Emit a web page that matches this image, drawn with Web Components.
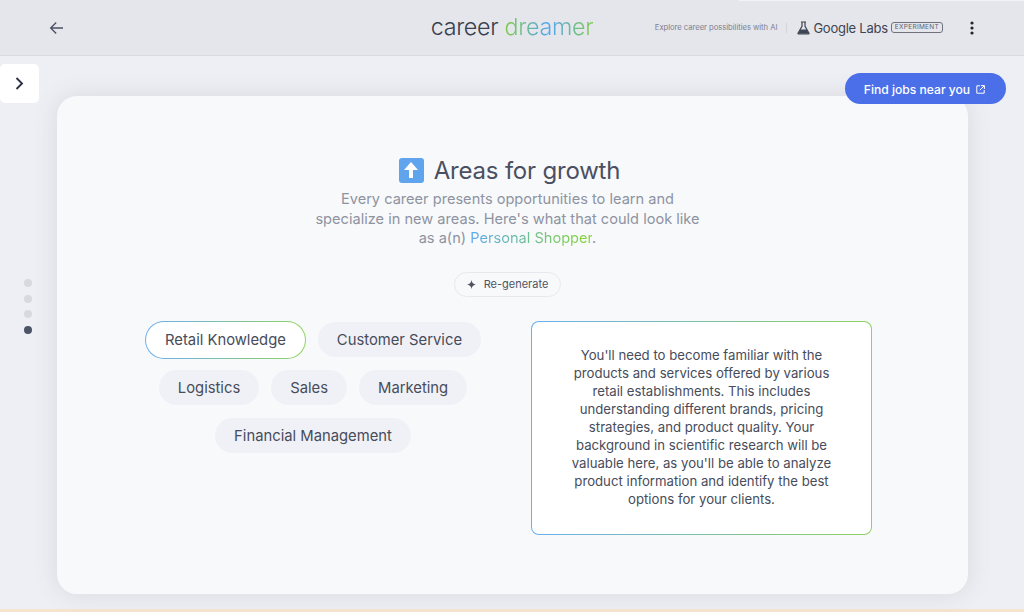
<!DOCTYPE html>
<html>
<head>
<meta charset="utf-8">
<title>Career Dreamer</title>
<style>
html, body { margin: 0; height: 100%; }
body {
    font-family: Inter, "Liberation Sans", sans-serif;
    background: #eeeff4;
    overflow: hidden;
}
</style>
</head>
<body>
<app-shell>
    <top-bar></top-bar>
    <side-toggle></side-toggle>
    <step-dots></step-dots>
    <jobs-button>Find jobs near you</jobs-button>
    <growth-card></growth-card>
</app-shell>

<script>
const gradient = 'linear-gradient(90deg, #6aaeef 0%, #8fd35f 100%)';

class AppShell extends HTMLElement {
    constructor() {
        super();
        this.attachShadow({mode: 'open'});
        this.shadowRoot.innerHTML = `
        <style>
        :host {
            display: flex;
            flex-direction: column;
            height: 612px;
            position: relative;
            box-sizing: border-box;
            border-bottom: 3px solid #f6e4cf;
            background: #eeeff4;
        }
        main {
            flex: 1;
            min-height: 0;
            padding: 40px 56px 15px 57px;
        }
        </style>
        <slot name="bar"></slot>
        <main><slot></slot></main>`;
        const bar = this.querySelector('top-bar');
        if (bar) bar.slot = 'bar';
    }
}

class TopBar extends HTMLElement {
    constructor() {
        super();
        this.attachShadow({mode: 'open'});
        this.shadowRoot.innerHTML = `
        <style>
        :host {
            display: grid;
            grid-template-columns: 1fr auto 1fr;
            align-items: center;
            height: 55px;
            background: linear-gradient(#f2f3f6, #f2f3f6) 739px 0 / 285px 1px no-repeat, #e5e6ec;
            border-bottom: 1px solid #d9dae0;
            color: #3c4354;
        }
        .back { padding-left: 49px; display: flex; }
        .logo {
            font-size: 23.3px;
            font-weight: 300;
            letter-spacing: -0.3px;
            color: #39404f;
            white-space: nowrap;
            padding-bottom: 2px;
        }
        .logo span {
            background: linear-gradient(90deg, #7fcb4a 0%, #55a5f0 50%, #7fcb4a 100%);
            -webkit-background-clip: text;
            background-clip: text;
            color: transparent;
        }
        .right {
            display: flex;
            align-items: center;
            justify-content: flex-end;
            padding-right: 50px;
        }
        .tag { font-size: 7.7px; color: #7c8190; white-space: nowrap; letter-spacing: -.05px; }
        .sep { width: 1px; height: 10px; background: #d3d4da; margin: 0 10px 0 9px; }
        .labs { font-size: 13px; letter-spacing: -.25px; color: #3f4452; margin: 0 3px 0 3px; white-space: nowrap; }
        .exp {
            font-size: 6.5px;
            letter-spacing: .3px;
            color: #5c606c;
            border: 1px solid #6e727d;
            border-radius: 3px;
            padding: 0 3px;
            line-height: 9px;
        }
        .more { display: flex; margin-left: 27px; }
        </style>
        <div class="back">
            <svg width="14" height="14" viewBox="0 0 14 14" fill="none" stroke="#4a5162" stroke-width="1.35">
                <path d="M14 7H2M7.2 1.5L1.7 7l5.5 5.5"/>
            </svg>
        </div>
        <div class="logo">career <span>dreamer</span></div>
        <div class="right">
            <span class="tag">Explore career possibilities with AI</span>
            <span class="sep"></span>
            <svg width="13" height="14" viewBox="0 0 13 14">
                <path d="M4 1h5M5 1v4.3L1 12.2Q.6 13 1.5 13h10q.9 0 .5-.8L8 5.3V1" fill="none" stroke="#3f4452" stroke-width="1.2"/>
                <path d="M3.2 8.6h6.6l2 4.2H1.2z" fill="#3f4452"/>
            </svg>
            <span class="labs">Google Labs</span>
            <span class="exp">EXPERIMENT</span>
            <span class="more">
                <svg width="4" height="14" viewBox="0 0 4 14" fill="#1f2430">
                    <circle cx="2" cy="2" r="1.6"/><circle cx="2" cy="7" r="1.6"/><circle cx="2" cy="12" r="1.6"/>
                </svg>
            </span>
        </div>`;
    }
}

class SideToggle extends HTMLElement {
    constructor() {
        super();
        this.attachShadow({mode: 'open'});
        this.shadowRoot.innerHTML = `
        <style>
        :host {
            position: absolute;
            left: 0;
            top: 64px;
            width: 39px;
            height: 39px;
            background: #fff;
            border-radius: 5px;
            display: flex;
            align-items: center;
            justify-content: center;
            z-index: 2;
        }
        </style>
        <svg width="9" height="13" viewBox="0 0 9 13" fill="none" stroke="#2d3342" stroke-width="1.9">
            <path d="M1.5 1l5.5 5.5L1.5 12"/>
        </svg>`;
    }
}

class StepDots extends HTMLElement {
    constructor() {
        super();
        this.attachShadow({mode: 'open'});
        this.shadowRoot.innerHTML = `
        <style>
        :host {
            position: absolute;
            left: 24px;
            top: 279px;
            display: flex;
            flex-direction: column;
            gap: 7.6px;
        }
        i { width: 8px; height: 8px; border-radius: 50%; background: #d8d9de; display: block; }
        i.on { background: #4c5366; }
        </style>
        <i></i><i></i><i></i><i class="on"></i>`;
    }
}

class JobsButton extends HTMLElement {
    constructor() {
        super();
        this.attachShadow({mode: 'open'});
        this.shadowRoot.innerHTML = `
        <style>
        :host {
            position: absolute;
            left: 845px;
            top: 73px;
            width: 161px;
            height: 31px;
            box-sizing: border-box;
            padding: 1px 2px 0 0;
            border-radius: 16px;
            background: #4b6fe9;
            color: #fff;
            font-size: 12.1px;
            font-weight: 500;
            display: flex;
            align-items: center;
            justify-content: center;
            gap: 6px;
            z-index: 2;
            white-space: nowrap;
        }
        </style>
        <slot></slot>
        <svg width="9" height="9" viewBox="0 0 9 9" fill="none" stroke="#fff" stroke-width="1">
            <path d="M4 .8H.8v7.4h7.4V5M5 .6h3.4V4M8.2.8L3.8 5.2"/>
        </svg>`;
    }
}

class SkillChip extends HTMLElement {
    constructor() {
        super();
        this.attachShadow({mode: 'open'});
        this.shadowRoot.innerHTML = `
        <style>
        :host {
            display: inline-flex;
            align-items: center;
            height: 35px;
            padding: 0 19px;
            border-radius: 18px;
            background: #f0f1f6;
            color: #474c5b;
            font-size: 14.8px;
            white-space: nowrap;
        }
        :host([selected]) {
            height: 38px;
            margin: -1.5px 0;
            padding: 0 19px;
            box-sizing: border-box;
            border: 1px solid transparent;
            border-radius: 19px;
            background: linear-gradient(#fff, #fff) padding-box, ${gradient} border-box;
        }
        </style>
        <slot></slot>`;
    }
}

class InfoPanel extends HTMLElement {
    constructor() {
        super();
        this.attachShadow({mode: 'open'});
        this.shadowRoot.innerHTML = `
        <style>
        :host {
            display: flex;
            align-items: center;
            justify-content: center;
            width: 341px;
            height: 214px;
            box-sizing: border-box;
            border: 1px solid transparent;
            border-radius: 8px;
            background: linear-gradient(#fff, #fff) padding-box, ${gradient} border-box;
            color: #474c5b;
            font-size: 13.2px;
            line-height: 18px;
            text-align: center;
            padding: 0 36px 2px;
        }
        </style>
        <slot></slot>`;
    }
}

class GrowthCard extends HTMLElement {
    constructor() {
        super();
        this.attachShadow({mode: 'open'});
        this.shadowRoot.innerHTML = `
        <style>
        :host {
            display: flex;
            flex-direction: column;
            align-items: center;
            height: 498px;
            box-sizing: border-box;
            padding: 58px 10px 0 0;
            background: #f8f9fb;
            border-radius: 20px;
            box-shadow: 0 0 24px rgba(90, 95, 115, .14);
        }
        .title { display: flex; align-items: center; gap: 10px; height: 32px; margin: 0 0 1px 4px; }
        .title h1 { margin: 0; font-size: 24px; font-weight: 400; letter-spacing: -.2px; color: #4a5061; }
        .icon {
            width: 25px; height: 25px; border-radius: 3px; background: #5fa4ec;
            display: flex; align-items: center; justify-content: center;
        }
        p.lead {
            margin: 3px 0 0;
            width: 400px;
            font-size: 14.6px;
            line-height: 19.5px;
            color: #8e93a1;
            text-align: center;
        }
        .line { display: block; }
        .role {
            background: linear-gradient(90deg, #5aa9f2 0%, #86d62f 100%);
            -webkit-background-clip: text;
            background-clip: text;
            color: transparent;
        }
        .regen {
            margin-top: 23px;
            height: 25px;
            box-sizing: border-box;
            padding: 0 12px;
            display: flex;
            align-items: center;
            gap: 8px;
            border: 1px solid #e8e9ee;
            border-radius: 13px;
            font-size: 11px;
            color: #4f5463;
        }
        .body {
            margin-top: 24px;
            width: 100%;
            box-sizing: border-box;
            padding: 0 86px 0 83.5px;
            display: flex;
            justify-content: space-between;
            align-items: flex-start;
        }
        .chips {
            width: 345px;
            display: flex;
            flex-wrap: wrap;
            justify-content: center;
            gap: 13px 12px;
            padding-top: 1.5px;
        }
        </style>
        <div class="title">
            <span class="icon">
                <svg width="14" height="16" viewBox="0 0 14 16" fill="#fff"><path d="M7 0l7 8H9v8H5V8H0z"/></svg>
            </span>
            <h1>Areas for growth</h1>
        </div>
        <p class="lead">Every career presents opportunities to learn and specialize in new areas. Here's what that could look like <span class="line">as a(n) <span class="role">Personal Shopper</span>.</span></p>
        <div class="regen">
            <svg width="9" height="9" viewBox="0 0 9 9" fill="#4f5463"><path d="M4.5 0Q5 4 9 4.5Q5 5 4.5 9Q4 5 0 4.5Q4 4 4.5 0z"/></svg>
            <span>Re-generate</span>
        </div>
        <div class="body">
            <div class="chips">
                <skill-chip selected>Retail Knowledge</skill-chip>
                <skill-chip>Customer Service</skill-chip>
                <skill-chip>Logistics</skill-chip>
                <skill-chip>Sales</skill-chip>
                <skill-chip>Marketing</skill-chip>
                <skill-chip>Financial Management</skill-chip>
            </div>
            <info-panel>You'll need to become familiar with the products and services offered by various retail establishments. This includes understanding different brands, pricing strategies, and product quality. Your background in scientific research will be valuable here, as you'll be able to analyze product information and identify the best options for your clients.</info-panel>
        </div>`;
    }
}

customElements.define('skill-chip', SkillChip);
customElements.define('info-panel', InfoPanel);
customElements.define('top-bar', TopBar);
customElements.define('side-toggle', SideToggle);
customElements.define('step-dots', StepDots);
customElements.define('jobs-button', JobsButton);
customElements.define('growth-card', GrowthCard);
customElements.define('app-shell', AppShell);
</script>
</body>
</html>
